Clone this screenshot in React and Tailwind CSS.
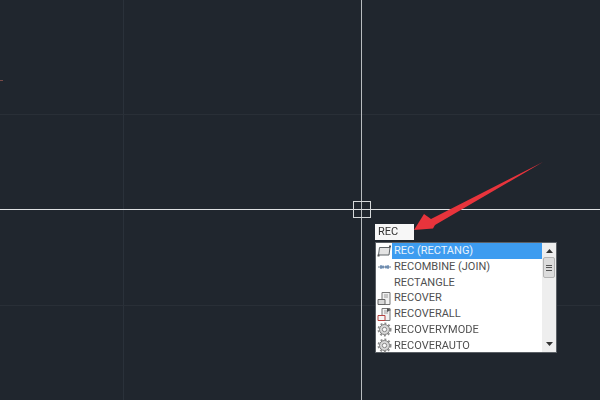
import React from "react";

const commands = [
  { label: "REC (RECTANG)", icon: "rect", active: true },
  { label: "RECOMBINE (JOIN)", icon: "join" },
  { label: "RECTANGLE" },
  { label: "RECOVER", icon: "recover" },
  { label: "RECOVERALL", icon: "recoverall" },
  { label: "RECOVERYMODE", icon: "gear" },
  { label: "RECOVERAUTO", icon: "gear" },
];

function CommandIcon({ type }) {
  if (type === "rect") {
    return (
      <svg width="15" height="14" viewBox="0 0 15 14" fill="none">
        <path d="M2.5 3.5 H13 L12 11 H1.5 Z" fill="#e4e4e4" stroke="#5f6468" strokeWidth="1" />
        <rect x="12" y="1.5" width="2" height="2" fill="#555" />
        <rect x="0.5" y="10.5" width="2" height="2" fill="#555" />
      </svg>
    );
  }
  if (type === "join") {
    return (
      <svg width="15" height="14" viewBox="0 0 15 14" fill="none">
        <path d="M1 7 H14" stroke="#6d7f92" strokeWidth="1" />
        <path d="M4 5 V9 M6 5.5 V8.5 M9 5.5 V8.5 M11 5 V9" stroke="#2f5f98" strokeWidth="1" />
      </svg>
    );
  }
  if (type === "recover" || type === "recoverall") {
    return (
      <svg width="15" height="15" viewBox="0 0 15 15" fill="none">
        <path d="M5 1.5 H13 V13.5 H5 Z" fill="#f1f1f1" stroke="#777" />
        <path d="M7 4 H11 M7 6 H11" stroke="#999" />
        <path d="M1 8.5 H8 V13.5 H1 Z" fill={type === "recover" ? "#d8d8d8" : "#f4f4f4"} stroke={type === "recover" ? "#666" : "#b5413f"} />
        {type === "recoverall" && <path d="M10 1 L14 3 L10 5 Z" fill="#555" />}
      </svg>
    );
  }
  if (type === "gear") {
    return (
      <svg width="15" height="15" viewBox="0 0 15 15" fill="none">
        <circle cx="7.5" cy="7.5" r="5" fill="#d8d8d8" stroke="#7a7a7a" strokeWidth="1" />
        <circle cx="7.5" cy="7.5" r="6.2" stroke="#8a8a8a" strokeWidth="1.6" strokeDasharray="2 2.05" />
        <circle cx="7.5" cy="7.5" r="2.2" fill="#fafafa" stroke="#888" strokeWidth="1" />
      </svg>
    );
  }
  return null;
}

export default function App() {
  return (
    <div className="relative w-[600px] h-[400px] overflow-hidden bg-[#20262e] font-['Roboto',sans-serif]">
      {/* grid */}
      <div className="absolute left-[123px] top-0 w-px h-full bg-[#2a313a]" />
      <div className="absolute left-0 top-[114px] w-full h-px bg-[#292f37]" />
      <div className="absolute left-0 top-[305px] w-full h-px bg-[#292f37]" />

      {/* crosshair */}
      <div className="absolute left-[361px] top-0 w-px h-full bg-[#b9bdc0]" />
      <div className="absolute left-0 top-[209px] w-full h-px bg-[#dfe1e3]" />
      <div className="absolute left-[353px] top-[201px] w-[18px] h-[17px] border border-[#d5d8da] blur-[0.3px]" />

      {/* stray mark at the left edge */}
      <div className="absolute left-0 top-[80px] w-[3px] h-px bg-[#7a4a48]" />

      {/* command input */}
      <div className="absolute left-[375px] top-[224px] w-[39px] h-[16px] bg-[#f7f7f7] pl-[3px] text-[11px] leading-[16px] text-[#333] blur-[0.3px]">
        REC
      </div>

      {/* autocomplete list */}
      <div className="absolute left-[375px] top-[242px] w-[182px] h-[111px] flex bg-white border border-[#5b6066] blur-[0.35px]">
        <div className="flex-1 min-w-0 flex flex-col">
          {commands.map((c) => (
            <div key={c.label} className="h-[15.8px] flex items-center">
              <div className="w-[16px] shrink-0 flex justify-center">
                {c.icon && <CommandIcon type={c.icon} />}
              </div>
              <div
                className={
                  "flex-1 h-full pl-[2px] text-[11px] leading-[15.8px] whitespace-nowrap " +
                  (c.active ? "bg-[#3d9cf0] text-[#e8f3fd]" : "text-[#505050]")
                }
              >
                {c.label}
              </div>
            </div>
          ))}
        </div>
        <div className="w-[14px] shrink-0 flex flex-col items-center justify-between bg-[#eeeeee]">
          <div className="flex flex-col items-center w-full">
            <svg className="mt-[6px]" width="7" height="4" viewBox="0 0 7 4">
              <path d="M3.5 0 L7 4 H0 Z" fill="#333" />
            </svg>
            <div className="mt-[4px] w-[12px] h-[21px] flex flex-col items-center justify-center gap-[1.5px] bg-[#dcdcdc] border border-[#b4b4b4] rounded-[2px]">
              <div className="w-[6px] h-px bg-[#555]" />
              <div className="w-[6px] h-px bg-[#555]" />
              <div className="w-[6px] h-px bg-[#555]" />
            </div>
          </div>
          <svg className="mb-[6px]" width="7" height="4" viewBox="0 0 7 4">
            <path d="M3.5 4 L7 0 H0 Z" fill="#333" />
          </svg>
        </div>
      </div>

      {/* red arrow annotation */}
      <svg className="absolute inset-0" width="600" height="400" viewBox="0 0 600 400" fill="none">
        <path d="M543 162 L431 219 L424 214 L414 230 L433 228.5 L435 225 Z" fill="#e8343c" />
      </svg>
    </div>
  );
}
